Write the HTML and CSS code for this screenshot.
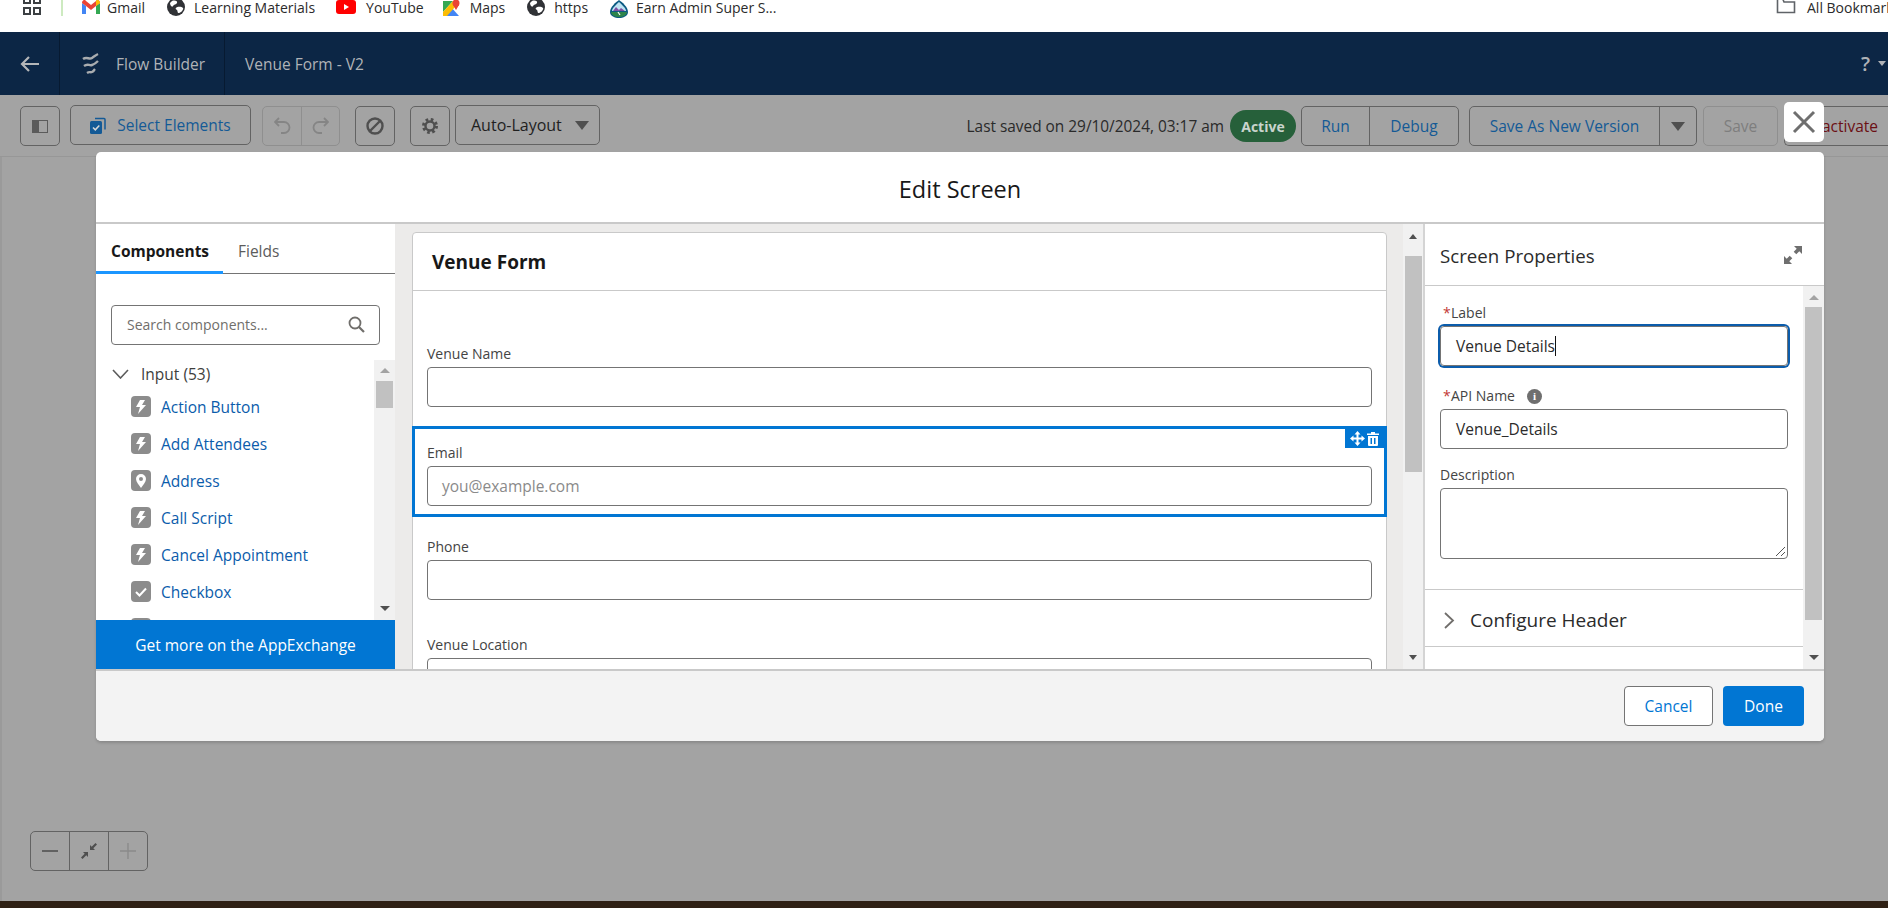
FILE: index.html
```html
<!DOCTYPE html>
<html>
  <head>
    <meta charset="UTF-8" />
    <title>Flow Builder</title>
    <link rel="stylesheet" href="styles.css">
  </head>
  <body>
    <!-- Browser bookmarks -->
    <div class="bookmarks">
      <svg class="bm-apps" width="20" height="16" viewBox="0 0 20 16"><g fill="none" stroke="#3c4043" stroke-width="2"><rect x="2" y="-3" width="6" height="6"/><rect x="12" y="-3" width="6" height="6"/><rect x="2" y="8" width="6" height="6"/><rect x="12" y="8" width="6" height="6"/></g></svg>
      <div class="bm-sep"></div>
      <div class="bm bm-gmail">
        <svg width="18" height="14" viewBox="0 0 18 14"><path d="M0 3v11h4V6z" fill="#4285f4"/><path d="M14 6v8h4V3z" fill="#34a853"/><path d="M0 3l4 3 5 4 5-4 4-3c0-3-3-4-4-2L9 5 4 1C3-1 0 0 0 3z" fill="#ea4335"/><path d="M14 1v5l4-3c0-3-3-4-4-2z" fill="#fbbc04"/></svg>
        <span>Gmail</span>
      </div>
      <div class="bm bm-learn">
        <svg width="18" height="18" viewBox="0 0 18 18"><circle cx="9" cy="9" r="9" fill="#303236"/><path d="M5 3c3-1 6 0 5 2S7 6 6 8 3 7 3 5zM9 10c2-2 6-1 7 0s-2 5-4 5-1-2-2-3-2-1-1-2z" fill="#fff"/></svg>
        <span>Learning Materials</span>
      </div>
      <div class="bm bm-yt">
        <svg width="20" height="14" viewBox="0 0 20 14"><rect width="20" height="14" rx="3" fill="#f00"/><path d="M8 4l5 3-5 3z" fill="#fff"/></svg>
        <span>YouTube</span>
      </div>
      <div class="bm bm-maps">
        <svg width="18" height="16" viewBox="0 0 18 16"><path d="M1 1h10L1 12z" fill="#34a853"/><path d="M1 16L9 7l8 9z" fill="#4285f4"/><path d="M1 12L11 1h2v6L5 16H1z" fill="#fbbc04"/><circle cx="14" cy="3" r="3.5" fill="#ea4335"/><path d="M11 5l3 5 3-5z" fill="#ea4335"/></svg>
        <span>Maps</span>
      </div>
      <div class="bm bm-https">
        <svg width="18" height="18" viewBox="0 0 18 18"><circle cx="9" cy="9" r="9" fill="#303236"/><path d="M5 3c3-1 6 0 5 2S7 6 6 8 3 7 3 5zM9 10c2-2 6-1 7 0s-2 5-4 5-1-2-2-3-2-1-1-2z" fill="#fff"/></svg>
        <span>https</span>
      </div>
      <div class="bm bm-earn">
        <svg width="20" height="18" viewBox="0 0 20 18"><path d="M10 0c3 2 9 7 9 12 0 4-5 6-9 6s-9-2-9-6C1 7 7 2 10 0z" fill="#0b5a82"/><path d="M10 2c2 2 7 6 7 9H3c0-3 5-7 7-9z" fill="#bfe3f2"/><path d="M4 11l3-4 3 3 2-2 4 3z" fill="#7f4fa3"/><path d="M2 12h16c0 3-4 5-8 5s-8-2-8-5z" fill="#2e844a"/><path d="M9 12l2 3" stroke="#fff" stroke-width="1.2"/></svg>
        <span>Earn Admin Super S...</span>
      </div>
      <div class="bm-right">
        <div class="bm-sep"></div>
        <svg class="bm-folder" width="20" height="14" viewBox="0 0 20 14"><path d="M1.500 -3v15.500h17V2H8L6 -3z" fill="none" stroke="#5f6368" stroke-width="1.600"/></svg>
        <span class="bm-all">All Bookmarks</span>
      </div>
    </div>

    <!-- Flow builder header -->
    <div class="app-header">
      <div class="back-cell">
        <svg width="20" height="18" viewBox="0 0 20 18"><path d="M19 9H2M9 2L2 9l7 7" fill="none" stroke="#b4b6b8" stroke-width="2.200"/></svg>
      </div>
      <div class="brand-cell">
        <svg width="20" height="24" viewBox="0 0 20 24"><g fill="none" stroke="#a9acaf" stroke-width="2.400"><path d="M2 7c4-3 6 1 9-1s4-3 6-4"/><path d="M3 14c4-3 5 0 8-1s4-2 6-4"/><path d="M6 21c3-2 3 0 5-1s2-2 3-3"/></g></svg>
        <span>Flow Builder</span>
      </div>
      <div class="flow-name">Venue Form - V2</div>
      <div class="help">
        <span class="help-mark">?</span>
        <span class="help-caret"></span>
      </div>
    </div>

    <!-- Toolbar -->
    <div class="toolbar">
      <div class="btn btn-icon">
        <svg width="16" height="13" viewBox="0 0 16 13"><rect x="0.500" y="0.500" width="15" height="12" fill="none" stroke="#5b5b5b"/><rect x="1" y="1" width="6" height="11" fill="#5b5b5b"/></svg>
      </div>
      <div class="btn btn-select">
        <svg width="16" height="17" viewBox="0 0 16 17"><path d="M5 1.500h9a1 1 0 0 1 1 1v10" fill="none" stroke="#145a96" stroke-width="1.500"/><rect x="0" y="4" width="12" height="13" rx="1.500" fill="#145a96"/><path d="M3 10.500l2.300 2.300 4-4.300" fill="none" stroke="#d8d8d8" stroke-width="1.500"/></svg>
        <span>Select Elements</span>
      </div>
      <div class="btn-group group-history">
        <div class="btn-part">
          <svg width="17" height="18" viewBox="0 0 17 18"><path d="M5 1L1 5l4 4M1.500 5H10a5.500 5.500 0 0 1 0 11H7" fill="none" stroke="#858585" stroke-width="1.800"/></svg>
        </div>
        <div class="btn-part">
          <svg width="17" height="18" viewBox="0 0 17 18"><path d="M12 1l4 4-4 4M15.500 5H7a5.500 5.500 0 0 0 0 11h3" fill="none" stroke="#858585" stroke-width="1.800"/></svg>
        </div>
      </div>
      <div class="btn btn-icon btn-stop">
        <svg width="18" height="18" viewBox="0 0 18 18"><circle cx="9" cy="9" r="7.500" fill="none" stroke="#4f4f4f" stroke-width="2.400"/><path d="M4 14L14 4" stroke="#4f4f4f" stroke-width="2.400"/></svg>
      </div>
      <div class="btn btn-icon btn-gear">
        <svg width="18" height="18" viewBox="0 0 18 18"><circle cx="9" cy="9" r="6.500" fill="none" stroke="#4f4f4f" stroke-width="3" stroke-dasharray="2.600 2.500"/><circle cx="9" cy="9" r="4.500" fill="none" stroke="#4f4f4f" stroke-width="2.400"/></svg>
      </div>
      <div class="btn btn-layout">
        <span>Auto-Layout</span>
        <span class="caret-down"></span>
      </div>

      <div class="toolbar-right">
        <span class="saved">Last saved on 29/10/2024, 03:17 am</span>
        <span class="badge">Active</span>
        <div class="btn-group group-run">
          <div class="btn-part part-run">Run</div>
          <div class="btn-part part-debug">Debug</div>
        </div>
        <div class="btn-group group-version">
          <div class="btn-part part-version">Save As New Version</div>
          <div class="btn-part part-more"><span class="caret-down"></span></div>
        </div>
        <div class="btn btn-save">Save</div>
        <div class="btn btn-deactivate">Deactivate</div>
      </div>
    </div>

    <!-- Canvas behind the modal -->
    <div class="canvas">
      <div class="zoom-controls">
        <div class="zoom-part">
          <svg width="18" height="4" viewBox="0 0 18 4"><path d="M1 2h16" stroke="#5a5a5a" stroke-width="1.800"/></svg>
        </div>
        <div class="zoom-part">
          <svg width="18" height="18" viewBox="0 0 18 18"><g fill="#4f4f4f"><path d="M10 8V3l1.700 1.700L15.500 1 17 2.500l-3.700 3.800L15 8z"/><path d="M8 10v5l-1.700-1.700L2.500 17 1 15.500l3.700-3.800L3 10z"/></g></svg>
        </div>
        <div class="zoom-part zoom-off">
          <svg width="16" height="16" viewBox="0 0 16 16"><path d="M0 8h16M8 0v16" stroke="#8a8a8a" stroke-width="1.400"/></svg>
        </div>
      </div>
    </div>
    <div class="taskbar"></div>

    <!-- Edit Screen modal -->
    <div class="modal-close">
      <svg width="24" height="24" viewBox="0 0 24 24"><path d="M2 2l20 20M22 2L2 22" stroke="#6f6f6f" stroke-width="3"/></svg>
    </div>
    <div class="modal">
      <div class="modal-header">Edit Screen</div>

      <div class="modal-body">
        <!-- Components palette -->
        <div class="palette">
          <div class="tabs">
            <div class="tab tab-active">Components</div>
            <div class="tab">Fields</div>
          </div>
          <div class="search">
            <span>Search components...</span>
            <svg width="17" height="17" viewBox="0 0 17 17"><circle cx="7" cy="7" r="5.500" fill="none" stroke="#706e6b" stroke-width="1.800"/><path d="M11 11l5 5" stroke="#706e6b" stroke-width="2.200"/></svg>
          </div>
          <div class="palette-scroll">
            <div class="palette-list">
              <div class="group-row">
                <svg width="17" height="10" viewBox="0 0 17 10"><path d="M1 1l7.500 8L16 1" fill="none" stroke="#5c5c5c" stroke-width="1.600"/></svg>
                <span>Input (53)</span>
              </div>
              <div class="comp-row">
                <span class="comp-icon"><svg width="12" height="14" viewBox="0 0 12 14"><path d="M5 0h5L7 5h4L3 14l2-7H1z" fill="#fff"/></svg></span>
                <span>Action Button</span>
              </div>
              <div class="comp-row">
                <span class="comp-icon"><svg width="12" height="14" viewBox="0 0 12 14"><path d="M5 0h5L7 5h4L3 14l2-7H1z" fill="#fff"/></svg></span>
                <span>Add Attendees</span>
              </div>
              <div class="comp-row">
                <span class="comp-icon"><svg width="12" height="14" viewBox="0 0 12 14"><path d="M6 0a5 5 0 0 1 5 5c0 3-3 6-5 9-2-3-5-6-5-9a5 5 0 0 1 5-5zm0 3a2 2 0 1 0 0 4 2 2 0 0 0 0-4z" fill="#fff" fill-rule="evenodd"/></svg></span>
                <span>Address</span>
              </div>
              <div class="comp-row">
                <span class="comp-icon"><svg width="12" height="14" viewBox="0 0 12 14"><path d="M5 0h5L7 5h4L3 14l2-7H1z" fill="#fff"/></svg></span>
                <span>Call Script</span>
              </div>
              <div class="comp-row">
                <span class="comp-icon"><svg width="12" height="14" viewBox="0 0 12 14"><path d="M5 0h5L7 5h4L3 14l2-7H1z" fill="#fff"/></svg></span>
                <span>Cancel Appointment</span>
              </div>
              <div class="comp-row">
                <span class="comp-icon"><svg width="12" height="10" viewBox="0 0 12 10"><path d="M1 5l3.500 3.500L11 1.500" fill="none" stroke="#fff" stroke-width="2"/></svg></span>
                <span>Checkbox</span>
              </div>
              <div class="comp-row">
                <span class="comp-icon"></span>
              </div>
            </div>
            <div class="scrollbar scrollbar-palette">
              <span class="arrow-up"></span>
              <span class="thumb"></span>
              <span class="arrow-down"></span>
            </div>
          </div>
          <div class="appexchange">Get more on the AppExchange</div>
        </div>

        <!-- Screen preview -->
        <div class="preview">
          <div class="preview-area">
            <div class="card">
              <div class="card-title">Venue Form</div>
              <div class="field field-name">
                <div class="field-label">Venue Name</div>
                <div class="input"></div>
              </div>
              <div class="field field-selected">
                <div class="field-tools">
                  <svg width="15" height="15" viewBox="0 0 15 15"><path d="M7.500 0l3 3.500h-2v3h3v-2l3.500 3-3.500 3v-2h-3v3h2l-3 3.500-3-3.500h2v-3h-3v2L0 7.500l3.500-3v2h3v-3h-2z" fill="#fff"/></svg>
                  <svg width="12" height="14" viewBox="0 0 12 14"><path d="M4 0h4v1.500h4v1.500H0V1.500h4zM1 4h10v9a1 1 0 0 1-1 1H2a1 1 0 0 1-1-1zm2.500 2v6h1.500V6zm3.500 0v6h1.500V6z" fill="#fff" fill-rule="evenodd"/></svg>
                </div>
                <div class="field-label">Email</div>
                <div class="input input-placeholder">you@example.com</div>
              </div>
              <div class="field field-phone">
                <div class="field-label">Phone</div>
                <div class="input"></div>
              </div>
              <div class="field field-location">
                <div class="field-label">Venue Location</div>
                <div class="input"></div>
              </div>
            </div>
          </div>
          <div class="scrollbar scrollbar-preview">
            <span class="arrow-up"></span>
            <span class="thumb"></span>
            <span class="arrow-down"></span>
          </div>
        </div>

        <!-- Screen properties -->
        <div class="props">
          <div class="props-header">
            <span>Screen Properties</span>
            <svg width="18" height="18" viewBox="0 0 18 18"><g fill="#6f6f6f"><path d="M10 0h8v8l-2.700-2.700-3 3-2.600-2.600 3-3z"/><path d="M8 18H0v-8l2.700 2.700 3-3 2.600 2.600-3 3z"/></g></svg>
          </div>
          <div class="props-scroll">
            <div class="props-content">
              <div class="props-form">
                <div class="prop-label"><span class="required">*</span>Label</div>
                <div class="prop-input prop-focus"><span>Venue Details</span><span class="text-caret"></span></div>
                <div class="prop-label prop-api"><span class="required">*</span>API Name<span class="info-icon">i</span></div>
                <div class="prop-input">Venue_Details</div>
                <div class="prop-label prop-desc">Description</div>
                <div class="prop-textarea">
                  <svg class="resize-grip" width="11" height="11" viewBox="0 0 11 11"><path d="M1 10l9-9M6 10l4-4" stroke="#555" stroke-width="1"/></svg>
                </div>
              </div>
              <div class="section-row">
                <svg width="11" height="17" viewBox="0 0 11 17"><path d="M1 1l8 7.500L1 16" fill="none" stroke="#706e6b" stroke-width="1.800"/></svg>
                <span>Configure Header</span>
              </div>
            </div>
            <div class="scrollbar scrollbar-props">
              <span class="arrow-up"></span>
              <span class="thumb"></span>
              <span class="arrow-down"></span>
            </div>
          </div>
        </div>
      </div>

      <div class="modal-footer">
        <div class="footer-btn btn-cancel">Cancel</div>
        <div class="footer-btn btn-done">Done</div>
      </div>
    </div>
  </body>
</html>
```

FILE: styles.css
```css
* {
  box-sizing: border-box;
}

body {
  margin: 0;
  width: 1888px;
  height: 908px;
  overflow: hidden;
  display: flex;
  flex-direction: column;
  position: relative;
  background-color: #a3a3a3;
  font-family: "Open Sans", "Noto Sans", sans-serif;
  font-size: 15.5px;
}

/* Bookmarks bar */
.bookmarks {
  height: 32px;
  flex: none;
  display: flex;
  align-items: flex-start;
  background-color: #fff;
  overflow: hidden;
  padding-left: 22px;
  color: #2b2b2b;
  font-size: 14px;
  line-height: 15px;
}

.bm {
  display: flex;
  align-items: flex-start;
  white-space: nowrap;
}

.bm svg {
  flex: none;
}

.bm-apps {
  flex: none;
}

.bm-sep {
  width: 2px;
  height: 16px;
  margin-left: 19px;
  background-color: #cdeac0;
}

.bm-gmail {
  margin-left: 19px;
}

.bm-gmail span {
  margin-left: 7px;
}

.bm-learn {
  margin-left: 22px;
}

.bm-learn svg,
.bm-https svg {
  margin-top: -2px;
}

.bm-learn span,
.bm-https span {
  margin-left: 9px;
}

.bm-yt {
  margin-left: 21px;
}

.bm-yt span {
  margin-left: 10px;
}

.bm-maps {
  margin-left: 18px;
}

.bm-maps span {
  margin-left: 10px;
}

.bm-https {
  margin-left: 22px;
}

.bm-earn {
  margin-left: 21px;
}

.bm-earn span {
  margin-left: 7px;
}

.bm-right {
  margin-left: auto;
  width: 131px;
  flex: none;
  display: flex;
  align-items: flex-start;
  white-space: nowrap;
}

.bm-right .bm-sep {
  margin-left: 0;
}

.bm-folder {
  flex: none;
  margin-left: 19px;
}

.bm-all {
  margin-left: 11px;
}

/* Navy header */
.app-header {
  height: 63px;
  flex: none;
  display: flex;
  align-items: center;
  background-color: #0c2645;
  color: #b0b3b7;
}

.back-cell {
  width: 60px;
  height: 100%;
  display: flex;
  align-items: center;
  justify-content: center;
  border-right: 1px solid #071a31;
}

.brand-cell {
  width: 165px;
  height: 100%;
  display: flex;
  align-items: center;
  padding-left: 21px;
  border-right: 1px solid #071a31;
}

.brand-cell span {
  margin-left: 15px;
}

.flow-name {
  margin-left: 20px;
}

.help {
  margin-left: auto;
  display: flex;
  align-items: center;
  padding-right: 2px;
}

.help-mark {
  font-size: 20px;
  font-weight: 600;
}

.help-caret {
  margin-left: 8px;
  border-left: 4px solid transparent;
  border-right: 4px solid transparent;
  border-top: 5px solid #b0b3b7;
}

/* Toolbar */
.toolbar {
  height: 62px;
  flex: none;
  display: flex;
  align-items: flex-start;
  padding: 11px 0 0 20px;
  background-color: #a3a3a3;
  border-bottom: 1px solid #979797;
  color: #1f1f1f;
}

.btn {
  height: 40px;
  flex: none;
  display: flex;
  align-items: center;
  justify-content: center;
  border: 1px solid #636363;
  border-radius: 5px;
}

.btn-icon {
  width: 40px;
}

.btn-select {
  width: 181px;
  margin: -1px 0 0 10px;
  color: #145a96;
}

.btn-select span {
  margin-left: 11px;
}

.btn-group {
  height: 40px;
  flex: none;
  display: flex;
  border: 1px solid #636363;
  border-radius: 5px;
}

.btn-part {
  height: 100%;
  display: flex;
  align-items: center;
  justify-content: center;
}

.btn-part + .btn-part {
  border-left: 1px solid #636363;
}

.group-history {
  width: 78px;
  margin-left: 11px;
  border-color: #8f8f8f;
}

.group-history .btn-part {
  width: 50%;
}

.group-history .btn-part + .btn-part {
  border-left-color: #8f8f8f;
}

.btn-stop {
  margin-left: 15px;
}

.btn-gear {
  margin-left: 15px;
}

.btn-layout {
  width: 145px;
  margin: -1px 0 0 5px;
  justify-content: flex-start;
  padding-left: 15px;
  font-size: 16px;
}

.caret-down {
  display: inline-block;
  border-left: 7px solid transparent;
  border-right: 7px solid transparent;
  border-top: 9px solid #4f4f4f;
}

.btn-layout .caret-down {
  margin-left: 13px;
}

.toolbar-right {
  margin-left: auto;
  display: flex;
  align-items: center;
}

.saved {
  color: #2a2a2a;
  white-space: nowrap;
  font-size: 15.4px;
}

.badge {
  width: 66px;
  height: 32px;
  margin-left: 6px;
  display: flex;
  align-items: center;
  justify-content: center;
  border-radius: 16px;
  background-color: #26603a;
  color: #c9d4cd;
  font-size: 14px;
  font-weight: 700;
}

.group-run {
  width: 158px;
  margin-left: 5px;
  color: #145a96;
}

.part-run {
  width: 67px;
}

.part-debug {
  width: 89px;
}

.group-version {
  width: 228px;
  margin-left: 10px;
  color: #145a96;
}

.part-version {
  width: 189px;
}

.part-more {
  width: 37px;
}

.btn-save {
  width: 75px;
  margin-left: 6px;
  border-color: #8f8f8f;
  color: #7e7e7e;
}

.btn-deactivate {
  width: 104px;
  margin-left: 6px;
  justify-content: flex-end;
  padding-right: 10px;
  border-right: none;
  border-radius: 5px 0 0 5px;
  color: #6b0f14;
}

/* Canvas */
.canvas {
  flex: 1;
  display: flex;
  flex-direction: column;
  justify-content: flex-end;
  padding: 0 0 30px 28px;
  border-left: 2px solid #9a9a9a;
}

.zoom-controls {
  width: 118px;
  height: 40px;
  display: flex;
  border: 1px solid #636363;
  border-radius: 5px;
}

.zoom-part {
  flex: 1;
  display: flex;
  align-items: center;
  justify-content: center;
  border-right: 1px solid #636363;
}

.zoom-off {
  border-right: none;
}

.taskbar {
  height: 7px;
  flex: none;
  background-color: #2f2115;
}

/* Modal */
.modal {
  position: absolute;
  left: 96px;
  top: 152px;
  width: 1728px;
  height: 589px;
  display: flex;
  flex-direction: column;
  background-color: #fff;
  border-radius: 5px;
  overflow: hidden;
  box-shadow: 0 2px 3px rgba(0, 0, 0, 0.16);
}

.modal-close {
  position: absolute;
  left: 1784px;
  top: 102px;
  width: 40px;
  height: 40px;
  display: flex;
  align-items: center;
  justify-content: center;
  background-color: #fff;
  border-radius: 5px;
}

.modal-header {
  height: 72px;
  flex: none;
  display: flex;
  align-items: center;
  justify-content: center;
  padding-top: 3px;
  border-bottom: 2px solid #c9c9c9;
  font-size: 23.5px;
  color: #181818;
}

.modal-body {
  flex: 1;
  min-height: 0;
  display: flex;
}

.modal-footer {
  height: 72px;
  flex: none;
  display: flex;
  justify-content: flex-end;
  align-items: flex-start;
  gap: 10px;
  padding: 15px 20px 0 0;
  background-color: #f3f3f3;
  border-top: 2px solid #c9c9c9;
}

.footer-btn {
  height: 40px;
  display: flex;
  align-items: center;
  justify-content: center;
  border-radius: 4px;
}

.btn-cancel {
  width: 89px;
  background-color: #fff;
  border: 1px solid #747474;
  color: #0176d3;
}

.btn-done {
  width: 81px;
  background-color: #0176d3;
  color: #fff;
}

/* Palette */
.palette {
  width: 299px;
  flex: none;
  display: flex;
  flex-direction: column;
  background-color: #fff;
}

.tabs {
  height: 50px;
  flex: none;
  display: flex;
  border-bottom: 1px solid #747474;
}

.tab {
  padding: 16px 0 0;
  color: #5c5c5c;
  margin-left: 15px;
}

.tab-active {
  width: 127px;
  margin: 0 0 -1px;
  padding-left: 15px;
  border-bottom: 3px solid #1b96ff;
  color: #181818;
  font-weight: 700;
}

.search {
  height: 40px;
  flex: none;
  margin: 31px 15px 0;
  padding: 0 14px 2px 15px;
  display: flex;
  align-items: center;
  justify-content: space-between;
  border: 1px solid #747474;
  border-radius: 4px;
  color: #706e6b;
  font-size: 14px;
}

.palette-scroll {
  flex: 1;
  min-height: 0;
  margin-top: 15px;
  display: flex;
  overflow: hidden;
}

.palette-list {
  flex: 1;
  overflow: hidden;
}

.group-row {
  height: 28px;
  display: flex;
  align-items: center;
  padding-left: 16px;
  color: #3e3e3c;
}

.group-row span {
  margin-left: 12px;
}

.comp-row {
  height: 37px;
  display: flex;
  align-items: center;
  padding-left: 35px;
  color: #0b5cab;
}

.comp-row span + span {
  margin-left: 10px;
}

.comp-icon {
  width: 20px;
  height: 21px;
  flex: none;
  display: flex;
  align-items: center;
  justify-content: center;
  border-radius: 4px;
  background-color: #8c8c8c;
}

.appexchange {
  height: 49px;
  flex: none;
  display: flex;
  align-items: center;
  justify-content: center;
  background-color: #0176d3;
  color: #fff;
}

/* Scrollbars */
.scrollbar {
  flex: none;
  display: flex;
  flex-direction: column;
  align-items: center;
  background-color: #f1f1f1;
}

.arrow-up,
.arrow-down {
  width: 0;
  height: 0;
  flex: none;
  border-left: 5px solid transparent;
  border-right: 5px solid transparent;
}

.arrow-up {
  border-bottom: 5px solid #a3a3a3;
}

.arrow-down {
  margin-top: auto;
  border-top: 5px solid #505050;
}

.thumb {
  width: 17px;
  flex: none;
  background-color: #c1c1c1;
}

.scrollbar-palette {
  width: 21px;
  padding: 8px 0 9px;
}

.scrollbar-palette .thumb {
  height: 27px;
  margin-top: 8px;
}

.scrollbar-preview {
  width: 20px;
  padding: 10px 0 9px;
  background-color: #f1f1f1;
}

.scrollbar-preview .thumb {
  height: 216px;
  margin-top: 17px;
}

.scrollbar-preview .arrow-up {
  border-bottom-color: #505050;
  border-left-width: 4px;
  border-right-width: 4px;
}

.scrollbar-preview .arrow-down {
  border-left-width: 4px;
  border-right-width: 4px;
}

.scrollbar-props {
  width: 21px;
  padding: 9px 0;
}

.scrollbar-props .thumb {
  height: 313px;
  margin-top: 7px;
}

/* Preview */
.preview {
  width: 1028px;
  flex: none;
  display: flex;
  background-color: #ecebea;
  overflow: hidden;
}

.preview-area {
  flex: 1;
  min-width: 0;
  padding: 8px 16px 0 17px;
}

.card {
  height: 460px;
  background-color: #fff;
  border: 1px solid #c9c9c9;
  border-radius: 4px;
}

.card-title {
  height: 58px;
  padding: 0 0 0 19px;
  display: flex;
  align-items: center;
  border-bottom: 1px solid #c9c9c9;
  font-size: 19px;
  font-weight: 700;
  color: #181818;
}

.field {
  padding: 0 14px;
}

.field-name {
  margin-top: 54px;
}

.field-selected {
  position: relative;
  margin: 19px -1px 0;
  padding: 15px 12px 8px;
  border: 3px solid #0176d3;
}

.field-phone {
  margin-top: 21px;
}

.field-location {
  margin-top: 36px;
}

.field-label {
  height: 18px;
  line-height: 18px;
  font-size: 14px;
  color: #444;
}

.field-tools {
  position: absolute;
  top: 0;
  right: 0;
  width: 39px;
  height: 19px;
  display: flex;
  align-items: center;
  justify-content: center;
  gap: 2px;
  background-color: #0176d3;
}

.input {
  height: 40px;
  margin-top: 4px;
  padding-left: 14px;
  display: flex;
  align-items: center;
  border: 1px solid #747474;
  border-radius: 4px;
  background-color: #fff;
}

.input-placeholder {
  color: #8a8a8a;
}

/* Properties */
.props {
  flex: 1;
  min-width: 0;
  display: flex;
  flex-direction: column;
  background-color: #fff;
  border-left: 2px solid #d4d4d4;
}

.props-header {
  height: 62px;
  flex: none;
  padding: 1px 22px 0 13px;
  display: flex;
  align-items: center;
  justify-content: space-between;
  border-bottom: 1px solid #c9c9c9;
  font-size: 18.7px;
  color: #2b2b2b;
}

.props-header span {
  margin-left: 2px;
}

.props-scroll {
  flex: 1;
  min-height: 0;
  display: flex;
}

.props-content {
  flex: 1;
  min-width: 0;
}

.props-form {
  height: 304px;
  padding: 18px 0 0 15px;
  border-bottom: 1px solid #c9c9c9;
}

.prop-label {
  height: 18px;
  line-height: 18px;
  font-size: 14px;
  color: #444;
  display: flex;
  align-items: center;
}

.required {
  width: 8px;
  margin-left: 3px;
  color: #c23934;
}

.prop-api {
  margin-top: 21px;
}

.prop-desc {
  margin-top: 17px;
}

.info-icon {
  width: 15px;
  height: 15px;
  margin-left: 12px;
  display: flex;
  align-items: center;
  justify-content: center;
  border-radius: 50%;
  background-color: #6f6f6f;
  color: #fff;
  font-size: 11px;
  font-weight: 700;
  font-family: "Liberation Serif", serif;
}

.prop-input {
  width: 348px;
  height: 40px;
  margin-top: 4px;
  padding-left: 15px;
  display: flex;
  align-items: center;
  border: 1px solid #747474;
  border-radius: 4px;
  color: #2b2b2b;
}

.prop-focus {
  box-shadow: 0 0 0 2px #0b5cab;
}

.text-caret {
  width: 1px;
  height: 20px;
  background-color: #111;
}

.prop-textarea {
  width: 348px;
  height: 71px;
  margin-top: 4px;
  position: relative;
  border: 1px solid #747474;
  border-radius: 4px;
}

.resize-grip {
  position: absolute;
  right: 1px;
  bottom: 1px;
}

.section-row {
  height: 57px;
  padding: 4px 0 0 19px;
  display: flex;
  align-items: center;
  border-bottom: 1px solid #c9c9c9;
  font-size: 19px;
  color: #2b2b2b;
}

.section-row span {
  margin-left: 15px;
}
```
